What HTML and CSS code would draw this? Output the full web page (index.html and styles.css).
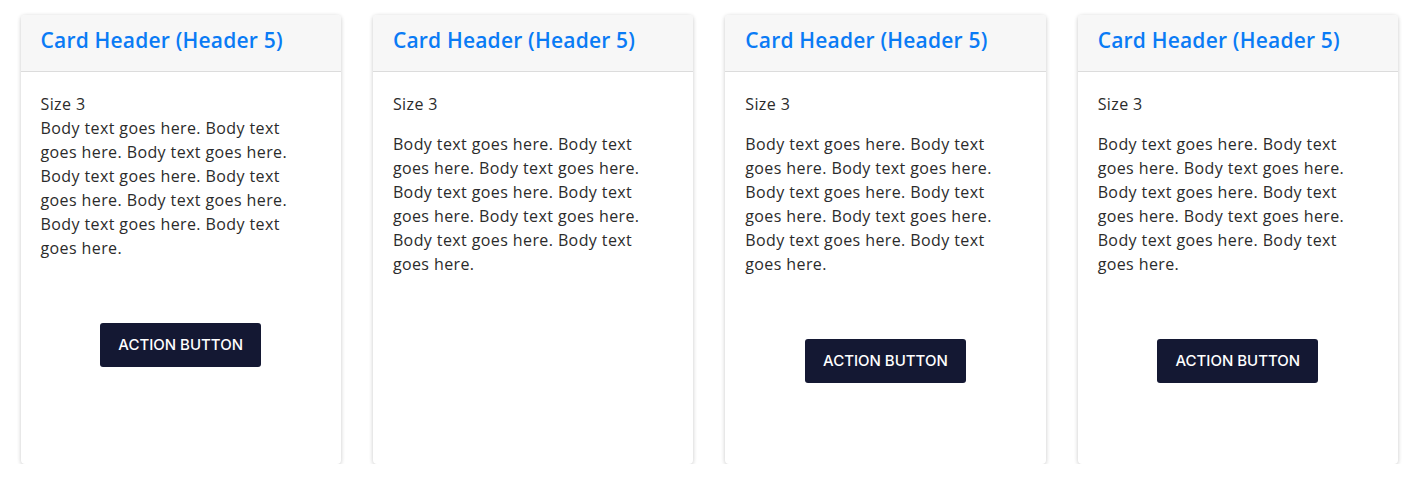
FILE: index.html
```html
<!DOCTYPE html>
<html>
<head>
	<meta charset="UTF-8">
	<title>Cards</title>
	<link rel="stylesheet" href="styles.css">
</head>
<body>
	<div class="row">

		<div class="card">
			<div class="card-header"><h5>Card Header (Header 5)</h5></div>
			<div class="card-body">
				<p class="text">Size 3<br>
				Body text goes here. Body text goes here. Body text goes here. Body text goes here. Body text goes here. Body text goes here. Body text goes here. Body text goes here.</p>
				<div class="actions"><button class="btn">ACTION BUTTON</button></div>
			</div>
		</div>

		<div class="card">
			<div class="card-header"><h5>Card Header (Header 5)</h5></div>
			<div class="card-body">
				<p class="text size">Size 3</p>
				<p class="text">Body text goes here. Body text goes here. Body text goes here. Body text goes here. Body text goes here. Body text goes here. Body text goes here. Body text goes here.</p>
			</div>
		</div>

		<div class="card">
			<div class="card-header"><h5>Card Header (Header 5)</h5></div>
			<div class="card-body">
				<p class="text size">Size 3</p>
				<p class="text">Body text goes here. Body text goes here. Body text goes here. Body text goes here. Body text goes here. Body text goes here. Body text goes here. Body text goes here.</p>
				<div class="actions"><button class="btn">ACTION BUTTON</button></div>
			</div>
		</div>

		<div class="card">
			<div class="card-header"><h5>Card Header (Header 5)</h5></div>
			<div class="card-body">
				<p class="text size">Size 3</p>
				<p class="text">Body text goes here. Body text goes here. Body text goes here. Body text goes here. Body text goes here. Body text goes here. Body text goes here. Body text goes here.</p>
				<div class="actions"><button class="btn">ACTION BUTTON</button></div>
			</div>
		</div>

	</div>
</body>
</html>
```

FILE: styles.css
```css
body {
	margin: 0;
	background: #ffffff;
	font-family: "Open Sans", "Liberation Sans", sans-serif;
	color: #212529;
}
.row {
	display: flex;
	gap: 32px;
	padding: 15px 18px 0 20.5px;
}
.card {
	flex: 1;
	height: 449px;
	background: #fff;
	border-radius: 4px;
	box-shadow: 0 1px 4px rgba(0, 0, 0, 0.22);
	overflow: hidden;
}
.card-header {
	background: #f7f7f7;
	border-bottom: 1px solid #dcdcdc;
	padding: 13px 20px 19px 20px;
}
.card-header h5 {
	margin: 0;
	font-size: 21px;
	line-height: 24px;
	font-weight: 600;
	letter-spacing: 0.2px;
	color: #0a7bf5;
}
.card-body {
	padding: 20px 26px 0 20px;
}
.text {
	margin: 0;
	font-size: 16px;
	line-height: 24px;
	letter-spacing: 0.4px;
	color: #2b2b2b;
}
.size {
	margin-bottom: 16px;
}
.actions {
	text-align: center;
	margin: 63px -6px 0 0;
}
.btn {
	font-family: "Inter", "Liberation Sans", sans-serif;
	font-size: 15px;
	font-weight: 500;
	line-height: 20px;
	color: #fff;
	background: #141833;
	border: none;
	border-radius: 3px;
	padding: 12px 18px;
}
```
